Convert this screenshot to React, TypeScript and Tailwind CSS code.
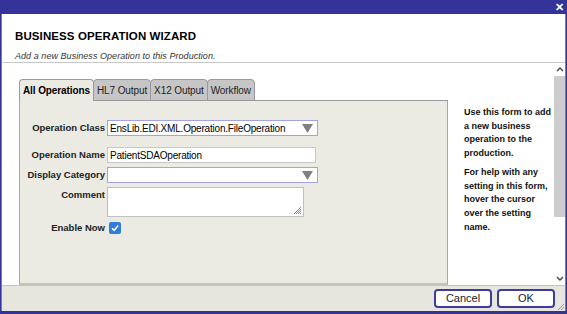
import { useState } from 'react';

const tabs = ['All Operations', 'HL7 Output', 'X12 Output', 'Workflow'];

function Arrow() {
  return (
    <svg width="11" height="9" viewBox="0 0 11 9" className="shrink-0">
      <path d="M0 0 L11 0 L5.5 9 Z" fill="#808080" />
    </svg>
  );
}

function Row({ label, children, top }: { label: string; children: React.ReactNode; top?: boolean }) {
  return (
    <div className={`flex ${top ? 'items-start' : 'items-center'} gap-[2px]`}>
      <div className={`w-[85px] text-right font-bold text-[9.5px] whitespace-nowrap text-[#222] ${top ? 'pt-[1px]' : ''}`}>{label}</div>
      {children}
    </div>
  );
}

export default function App() {
  const [active] = useState(0);

  return (
    <div className="w-[567px] h-[314px] flex flex-col bg-[#333399] font-['Liberation_Sans',Arial,sans-serif] overflow-hidden">
      <div className="h-[14px] flex items-center justify-end pr-[3px]">
        <span className="text-white font-bold text-[11px] leading-none">✕</span>
      </div>
      <div className="flex-1 flex flex-col mx-[1px] border-l border-r border-[#7777cc] bg-white min-h-0">
        <div className="h-[49px] border-b border-[#c8c8c8] pl-[13px] pt-[15px]">
          <div className="font-bold text-[11.5px] leading-[14px] tracking-[0.1px] text-black">BUSINESS OPERATION WIZARD</div>
          <div className="italic text-[9px] leading-[12px] mt-[7px] text-[#333] tracking-[0.05px]">Add a new Business Operation to this Production.</div>
        </div>
        <div className="flex-1 flex min-h-0">
          <div className="w-[17px] bg-white" />
          <div className="w-[429px] flex flex-col pt-[16px]">
            <div className="flex items-end h-[22px]">
              {tabs.map((t, i) => (
                <div
                  key={t}
                  className={`h-full px-[3px] flex items-center text-[10px] tracking-[-0.1px] border border-[#999] rounded-t-[4px] -mr-[1px] ${
                    i === active ? 'bg-[#ebeae3] font-bold text-black border-b-0 z-10' : 'bg-[#c6c6c6] text-[#222] border-b-[#999]'
                  }`}
                >
                  {t}
                </div>
              ))}
              <div className="flex-1 border-b border-[#999]" />
            </div>
            <div className="flex-1 bg-[#ebeae3] border-l border-r border-b-2 border-[#a8a8a0] border-b-[#c4c4bc] pt-[19px] flex flex-col gap-[4px]">
              <Row label="Operation Class">
                <div className="w-[211px] h-[16px] bg-white border border-[#a4a4dd] flex items-center justify-between pl-[2px] pr-[4px] text-[10px] tracking-[-0.2px]">
                  <span>EnsLib.EDI.XML.Operation.FileOperation</span>
                  <Arrow />
                </div>
              </Row>
              <div className="h-[3px]" />
              <Row label="Operation Name">
                <div className="w-[209px] h-[16px] bg-white border border-[#c8c8c8] flex items-center pl-[2px] text-[10px] tracking-[-0.2px]">
                  PatientSDAOperation
                </div>
              </Row>
              <Row label="Display Category">
                <div className="w-[211px] h-[16px] bg-white border border-[#a4a4dd] flex items-center justify-end pr-[4px]">
                  <Arrow />
                </div>
              </Row>
              <Row label="Comment" top>
                <div className="w-[197px] h-[30px] bg-white border border-[#c0c0c0] relative">
                  <svg width="10" height="10" viewBox="0 0 10 10" className="absolute right-[1px] bottom-[1px]">
                    <path d="M9 2 L2 9 M9 4 L4 9 M9 6 L6 9 M9 8 L8 9" stroke="#888" strokeWidth="1" />
                  </svg>
                </div>
              </Row>
              <Row label="Enable Now">
                <div className="w-[12px] h-[12px] ml-[2px] -mt-[1px] rounded-[2px] bg-[#2f7ddd] flex items-center justify-center">
                  <svg width="10" height="10" viewBox="0 0 10 10">
                    <path d="M2 5.2 L4.2 7.4 L8.2 2.6" stroke="white" strokeWidth="1.6" fill="none" />
                  </svg>
                </div>
              </Row>
            </div>
          </div>
          <div className="flex-1 bg-white pl-[16px] pt-[43px] pr-[1px] text-[9px] font-bold leading-[13.7px] text-[#111]">
            <p>Use this form to add a new business operation to the production.</p>
            <p className="mt-[5px]">For help with any setting in this form, hover the cursor over the setting name.</p>
          </div>
          <div className="w-[11px] bg-white flex flex-col items-center">
            <div className="h-[13px] flex items-center justify-center">
              <svg width="8" height="5" viewBox="0 0 8 5"><path d="M1 4 L4 1 L7 4" stroke="#444" strokeWidth="1.4" fill="none" /></svg>
            </div>
            <div className="w-full h-[141px] bg-[#cdcdcd]" />
            <div className="flex-1" />
            <div className="h-[13px] flex items-center justify-center">
              <svg width="8" height="5" viewBox="0 0 8 5"><path d="M1 1 L4 4 L7 1" stroke="#444" strokeWidth="1.4" fill="none" /></svg>
            </div>
          </div>
        </div>
        <div className="h-[26px] bg-[#e6e5de] border-t border-[#c4c4bc] flex items-center justify-end gap-[5px] pr-[10px] relative">
          <button className="w-[58px] h-[19px] bg-white border-2 border-[#3c3c9c] rounded-[4px] text-[11px] text-[#222] leading-none">Cancel</button>
          <button className="w-[58px] h-[19px] bg-white border-2 border-[#3c3c9c] rounded-[4px] text-[11px] text-[#222] leading-none">OK</button>
          <svg width="8" height="8" viewBox="0 0 8 8" className="absolute right-0 bottom-0">
            <path d="M7 1 L1 7 M7 4 L4 7" stroke="#999" strokeWidth="1" />
          </svg>
        </div>
      </div>
      <div className="h-[3px]" />
    </div>
  );
}
